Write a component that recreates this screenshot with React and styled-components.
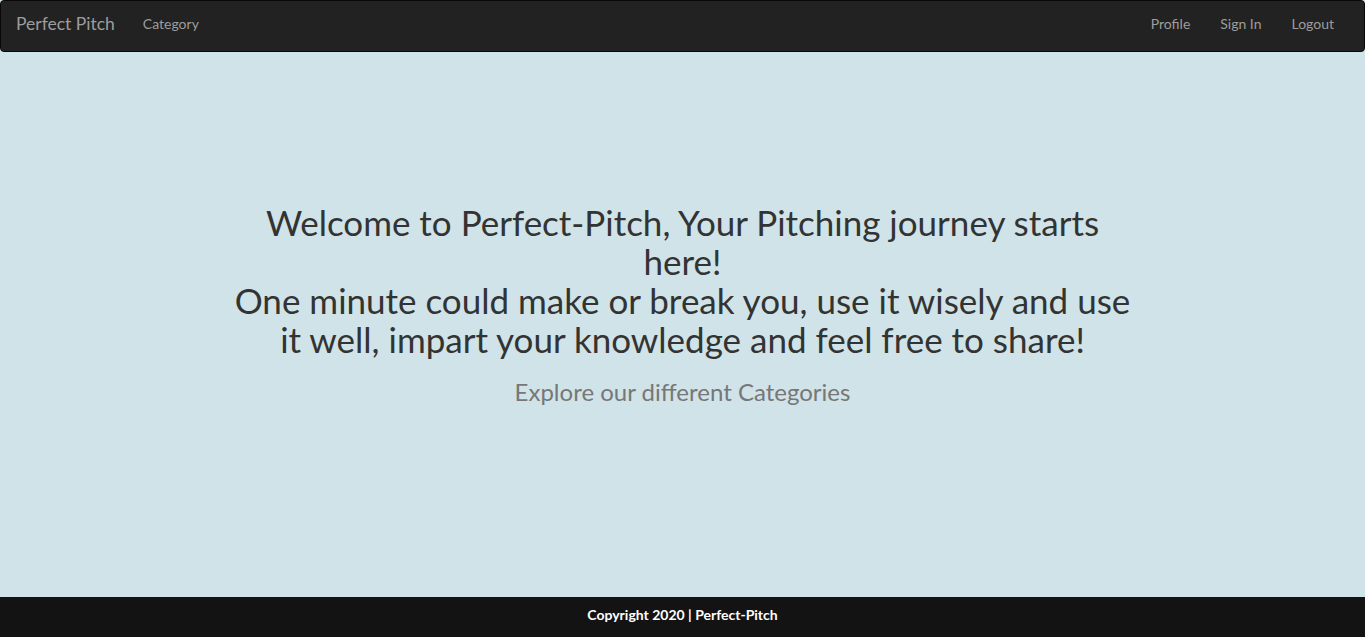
import React from "react";
import styled, { createGlobalStyle } from "styled-components";

const GlobalStyle = createGlobalStyle`
  html, body {
    margin: 0;
    padding: 0;
    height: 100%;
  }
  body {
    font-family: Lato, "Open Sans", sans-serif;
    background: #cfe3e8;
  }
  #root {
    min-height: 100%;
  }
`;

const Page = styled.div`
  display: flex;
  flex-direction: column;
  min-height: 637px;
`;

const NavBar = styled.nav`
  display: flex;
  align-items: center;
  justify-content: space-between;
  box-sizing: border-box;
  height: 52px;
  padding: 0 15px 5px;
  background: #222;
  border: 1px solid #080808;
  border-radius: 4px;
`;

const NavGroup = styled.div`
  display: flex;
  align-items: center;
`;

const Brand = styled.a`
  font-size: 17.5px;
  color: #9d9d9d;
  text-decoration: none;
  margin-right: 13px;
`;

const NavLink = styled.a`
  font-size: 14px;
  color: #9d9d9d;
  text-decoration: none;
  padding: 0 15px;
`;

const Main = styled.main`
  flex: 1;
  display: flex;
  flex-direction: column;
  align-items: center;
  justify-content: center;
  padding-bottom: 40px;
  text-align: center;
`;

const Headline = styled.h1`
  margin: 0;
  font-size: 35px;
  font-weight: 400;
  line-height: 39px;
  color: #333;
`;

const SubHead = styled.h3`
  margin: 18px 0 0;
  font-size: 24px;
  font-weight: 400;
  color: #777;
`;

const Footer = styled.footer`
  box-sizing: border-box;
  height: 40px;
  padding-bottom: 5px;
  background: #131313;
  color: #fff;
  display: flex;
  align-items: center;
  justify-content: center;
  font-size: 14px;
  font-weight: 700;
`;

export default function App() {
  return (
    <>
      <GlobalStyle />
      <Page>
        <NavBar>
          <NavGroup>
            <Brand href="#">Perfect Pitch</Brand>
            <NavLink href="#">Category</NavLink>
          </NavGroup>
          <NavGroup>
            <NavLink href="#">Profile</NavLink>
            <NavLink href="#">Sign In</NavLink>
            <NavLink href="#">Logout</NavLink>
          </NavGroup>
        </NavBar>
        <Main>
          <Headline>
            Welcome to Perfect-Pitch, Your Pitching journey starts
            <br />
            here!
            <br />
            One minute could make or break you, use it wisely and use
            <br />
            it well, impart your knowledge and feel free to share!
          </Headline>
          <SubHead>Explore our different Categories</SubHead>
        </Main>
        <Footer>Copyright 2020 | Perfect-Pitch</Footer>
      </Page>
    </>
  );
}
